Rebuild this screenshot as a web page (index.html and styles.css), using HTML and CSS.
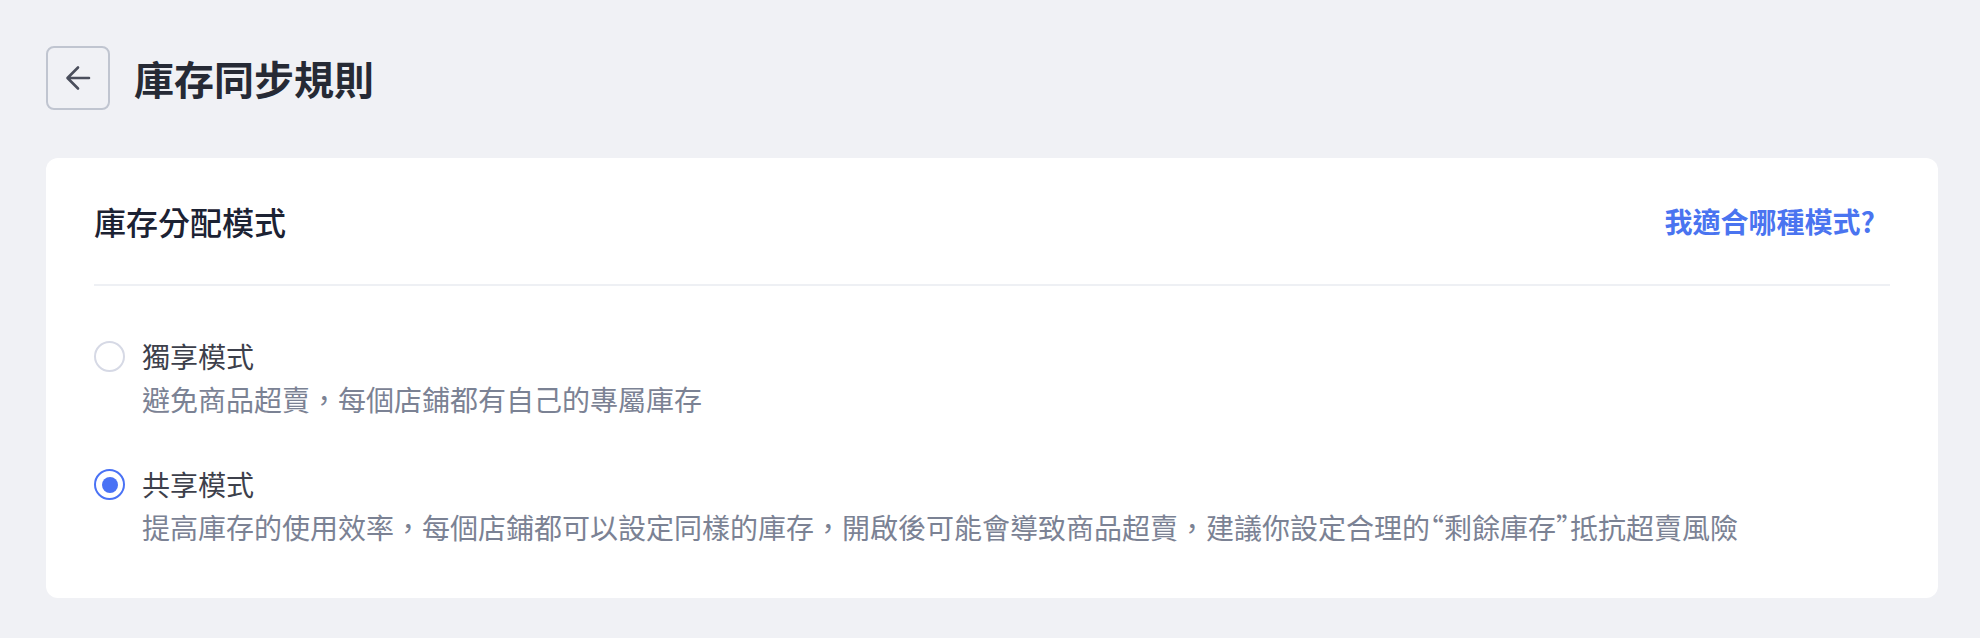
FILE: index.html
```html
<!DOCTYPE html>
<html lang="zh-Hant">

<head>
    <meta charset="UTF-8">
    <meta name="viewport" content="width=device-width, initial-scale=1.0">
    <title>庫存同步規則</title>
    <link rel="stylesheet" href="styles.css">
</head>

<body>
    <div class="pageHeader">
        <button type="button" class="backBtn" aria-label="返回">
            <svg width="28" height="28" viewBox="0 0 28 28" fill="none">
                <path d="M25 14H4M14 3.5L3.5 14L14 24.5" stroke="#4a4e5c" stroke-width="2.6" stroke-linecap="round" stroke-linejoin="round" />
            </svg>
        </button>
        <h1>庫存同步規則</h1>
    </div>

    <div class="card">
        <div class="cardHeader">
            <h2>庫存分配模式</h2>
            <a href="#" class="helpLink">我適合哪種模式?</a>
        </div>

        <div class="options">
            <label class="option">
                <input type="radio" name="mode" value="exclusive">
                <span class="radio"></span>
                <span class="optionText">
                    <span class="optionTitle">獨享模式</span>
                    <span class="optionDesc">避免商品超賣，每個店鋪都有自己的專屬庫存</span>
                </span>
            </label>

            <label class="option">
                <input type="radio" name="mode" value="shared" checked>
                <span class="radio"></span>
                <span class="optionText">
                    <span class="optionTitle">共享模式</span>
                    <span class="optionDesc">提高庫存的使用效率，每個店鋪都可以設定同樣的庫存，開啟後可能會導致商品超賣，建議你設定合理的<span class="quote">“剩餘庫存”</span>抵抗超賣風險</span>
                </span>
            </label>
        </div>
    </div>
</body>

</html>
```

FILE: styles.css
```css
*,
*::after,
*::before {
    box-sizing: border-box;
}

body {
    margin: 0;
    padding: 46px 42px 0 46px;
    background-color: #f0f1f5;
    font-family: "Noto Sans CJK TC", "Noto Sans", sans-serif;
}

.pageHeader {
    display: flex;
    align-items: center;
    gap: 24px;
}

.backBtn {
    width: 64px;
    height: 64px;
    padding: 0;
    display: flex;
    align-items: center;
    justify-content: center;
    background: transparent;
    border: 2px solid #c0c5d0;
    border-radius: 8px;
    cursor: pointer;
}

.pageHeader>h1 {
    margin: 0;
    font-size: 40px;
    line-height: 56px;
    font-weight: 700;
    color: #262a35;
}

.card {
    margin-top: 48px;
    background-color: #fff;
    border-radius: 12px;
    padding: 0 48px 50px;
}

.cardHeader {
    display: flex;
    align-items: center;
    justify-content: space-between;
    padding: 39px 0 39px;
    border-bottom: 2px solid #eef0f4;
}

.cardHeader>h2 {
    margin: 0;
    font-size: 32px;
    line-height: 48px;
    font-weight: 500;
    color: #1c2233;
}

.helpLink {
    margin-right: 15px;
    font-size: 28px;
    line-height: 48px;
    font-weight: 700;
    color: #4a74f0;
    text-decoration: none;
}

.options {
    padding-top: 48px;
    display: flex;
    flex-direction: column;
    gap: 42px;
}

.option {
    display: flex;
    align-items: flex-start;
    gap: 17px;
    cursor: pointer;
}

.option>input {
    display: none;
}

.radio {
    flex: none;
    width: 31px;
    height: 31px;
    margin-top: 7px;
    border: 2px solid #d6d9e5;
    border-radius: 50%;
    display: flex;
    align-items: center;
    justify-content: center;
}

.option>input:checked+.radio {
    border-color: #4a72f5;
}

.option>input:checked+.radio::after {
    content: "";
    width: 16px;
    height: 16px;
    border-radius: 50%;
    background-color: #4a72f5;
}

.optionText {
    display: flex;
    flex-direction: column;
}

.optionTitle {
    font-size: 28px;
    line-height: 44px;
    color: #3d404b;
}

.optionDesc {
    font-size: 28px;
    line-height: 42px;
    color: #7b8294;
}

/* half-width quote marks, like the design */
.quote {
    font-feature-settings: "halt";
}
```
